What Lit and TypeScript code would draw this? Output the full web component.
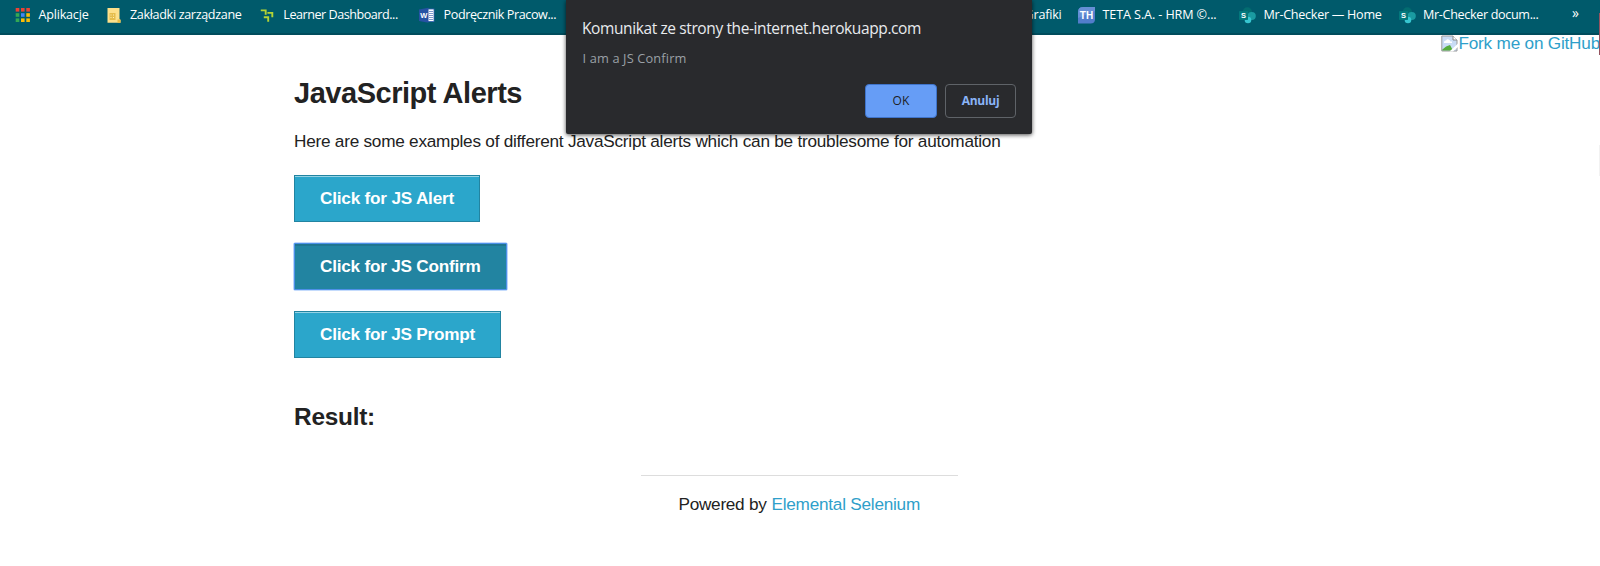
import { LitElement, html, css, svg, nothing } from "lit";
import { customElement, property, state } from "lit/decorators.js";
import { styleMap } from "lit/directives/style-map.js";

/** One line of text whose tracking is adjusted so that it spans a given width. */
@customElement("fit-text")
class FitText extends LitElement {
  static styles = css`
    :host { display: inline-block; white-space: nowrap; }
    .line { display: inline-block; white-space: pre; }
  `;
  @property() text = "";
  @property({ type: Number }) width = 0;
  @state() tracking = 0;
  firstUpdated() {
    const line = this.renderRoot.querySelector(".line") as HTMLElement;
    const natural = line.getBoundingClientRect().width;
    if (natural) this.tracking = (this.width - natural) / this.text.length;
  }
  render() {
    return html`<span class="line" style=${styleMap({ letterSpacing: `${this.tracking}px` })}>${this.text}</span>`;
  }
}

const appsColors = ["#ea4335", "#ea4335", "#ea4335", "#34a853", "#4285f4", "#fbbc05", "#34a853", "#fbbc05", "#fbbc05"];

const icons: Record<string, unknown> = {
  apps: svg`${appsColors.map((c, i) => svg`<rect x=${1.7 + (i % 3) * 5.3} y=${1 + Math.floor(i / 3) * 5.2} width="3.6" height="3.6" fill=${c} />`)}`,
  folder: svg`<path d="M2.5 1h12v11l1 1v2.8h-13z" fill="#fde08a"/><path d="M12.5 12.5h3v3.3h-3z" fill="#e9bd45"/><path d="M4.5 6h6v7h-6z" fill="#e5bd4c"/><path d="M5.5 7.5h1v1h-1zM8 7.5h1v1H8zM5.5 10h1v1h-1zM8 10h1v1H8z" fill="#fff0b5"/>`,
  learner: svg`<g fill="none" stroke="#b3d335" stroke-width="1.9"><path d="M1.8 3.4h4.9v4.4M8.4 5.9h4.9v4.4M4.8 10.2h4.4v4.6"/></g>`,
  word: svg`<rect x="8" y="2" width="7" height="12.5" fill="#fff" stroke="#3460b2" stroke-width=".8"/><path d="M10 4.5h4M10 6.5h4M10 8.5h4M10 10.5h4M10 12.5h4" stroke="#7190c8" stroke-width=".9"/><path d="M0 2.4 9.5.8v15L0 14z" fill="#2652a3"/><text x="4.7" y="11" text-anchor="middle" font-size="7.5" font-weight="700" font-family="Liberation Sans, sans-serif" fill="#fff">W</text>`,
  teta: svg`<path d="M5 0h12v12q0 4.5-4.5 4.5H0V5q0-5 5-5z" fill="#527dcb"/><path d="M5 0h12v4L0 11V5q0-5 5-5z" fill="#749bdc" opacity=".6"/><text x="8.5" y="12" text-anchor="middle" font-size="10" font-weight="700" font-family="Liberation Sans, sans-serif" fill="#fff">TH</text>`,
  share: svg`<circle cx="8.3" cy="5" r="4.7" fill="#036c70"/><circle cx="12.7" cy="9" r="4.1" fill="#1a9ba1"/><circle cx="9" cy="13" r="3.3" fill="#37c6d0"/><rect x="0" y="4" width="9" height="9" rx=".8" fill="#03787c"/><text x="4.5" y="11" text-anchor="middle" font-size="7.5" font-weight="700" font-family="Liberation Sans, sans-serif" fill="#fff">S</text>`,
};

interface Bookmark { icon: string; label: string; width: number; gap: number; after: number }

const leftMarks: Bookmark[] = [
  { icon: "apps", label: "Aplikacje", width: 50, gap: 7.5, after: 16.5 },
  { icon: "folder", label: "Zakładki zarządzane", width: 111.5, gap: 8, after: 17 },
  { icon: "learner", label: "Learner Dashboard...", width: 114.5, gap: 7.8, after: 21 },
  { icon: "word", label: "Podręcznik Pracow...", width: 112.5, gap: 7.8, after: 0 },
];
const rightMarks: Bookmark[] = [
  { icon: "", label: "Grafiki", width: 37, gap: 0, after: 16.5 },
  { icon: "teta", label: "TETA S.A. - HRM ©...", width: 114, gap: 7.5, after: 22.5 },
  { icon: "share", label: "Mr-Checker — Home", width: 118, gap: 7.5, after: 17 },
  { icon: "share", label: "Mr-Checker docum...", width: 115.5, gap: 7.5, after: 33.5 },
];

@customElement("app-root")
class AppRoot extends LitElement {
  static styles = css`
    :host { display: block; position: relative; width: 1600px; height: 566px; overflow: hidden; background: #fff; color: #222; font: 17.2px/24px "Liberation Sans", Arial, sans-serif; }
    * { box-sizing: border-box; }
    .bar { display: flex; justify-content: space-between; height: 35px; background: #005a6b; border-bottom: 2px solid #004c5c; color: #fff; font: 12.6px/29px "Open Sans", "Noto Sans", sans-serif; padding: 0 21px 0 14px; }
    .group { display: flex; align-items: flex-start; }
    .mark { display: flex; }
    .icon { width: 17px; height: 17px; margin-top: 7px; flex: none; }
    .more { font-size: 14px; line-height: 26px; }
    .fork { display: flex; justify-content: flex-end; height: 24px; margin-top: -4px; color: #2f9fca; line-height: 25px; }
    .broken { width: 17px; height: 17px; margin-top: 4px; flex: none; }
    .edge { position: absolute; right: 0; top: 13px; width: 1px; height: 42px; background: #94525f; }
    .edge-light { position: absolute; right: 0; top: 145px; width: 1px; height: 31px; background: #f2f2f2; }
    .content { padding-left: 294px; margin-top: 18px; display: flex; flex-direction: column; align-items: flex-start; }
    h1 { margin: 0; font-size: 29px; line-height: 40px; font-weight: 700; }
    p { margin: 16px 0 22px; line-height: 24px; }
    .buttons { display: flex; flex-direction: column; align-items: flex-start; gap: 21px; }
    .btn { display: block; height: 47px; margin: 0; padding: 0 25px; border: 1px solid #2284a1; border-radius: 0; background: #2ba6cb; color: #fff; font: 700 17.2px/45px "Liberation Sans", Arial, sans-serif; box-shadow: inset 0 1px 0 rgba(255,255,255,.5); }
    .btn.focused { background: #2284a1; border-color: #4d90e8; box-shadow: inset 0 2px 0 #1f7590, 0 0 0 .6px #8ab8fa; border-radius: 1px; }
    h2 { margin: 42px 0 0; font-size: 24.4px; line-height: 34px; font-weight: 700; }
    .footer { width: 317px; margin: 41px 0 0 641px; border-top: 1px solid #ddd; padding: 17px 0 0 37.5px; display: flex; line-height: 23px; }
    .link { color: #2f9fca; margin-left: 5px; }
    .dialog { position: absolute; left: 566px; top: 0; width: 466px; height: 134px; padding: 14px 16px 16px; background: #292a2d; border-radius: 0 0 2px 2px; box-shadow: 0 1px 4px rgba(0,0,0,.7); font-family: "Open Sans", "Noto Sans", sans-serif; display: flex; flex-direction: column; }
    .title { color: #e8eaed; font-size: 15.5px; line-height: 28px; }
    .message { color: #9aa0a6; font-size: 12.8px; line-height: 20px; margin-top: 6px; padding-left: .5px; }
    .actions { display: flex; justify-content: flex-end; gap: 8px; margin-top: 16px; }
    .act { display: flex; justify-content: center; width: 71px; height: 34px; margin: 0; padding: 0; border: 1px solid #5f6368; border-radius: 4px; background: transparent; color: #8ab4f8; font: 700 12px/32px "Open Sans", "Noto Sans", sans-serif; }
    .act.ok { width: 72px; background: #669df6; border-color: #3f74cb; color: #202124; font-weight: 500; }
  `;

  mark(b: Bookmark) {
    return html`<div class="mark" style=${styleMap({ columnGap: `${b.gap}px`, marginRight: `${b.after}px` })}>
      ${b.icon ? html`<svg class="icon" viewBox="0 0 17 17">${icons[b.icon]}</svg>` : nothing}
      <fit-text .text=${b.label} .width=${b.width}></fit-text>
    </div>`;
  }

  render() {
    return html`
      <div class="bar">
        <div class="group">${leftMarks.map((b) => this.mark(b))}</div>
        <div class="group">${rightMarks.map((b) => this.mark(b))}<span class="more">»</span></div>
      </div>
      <div class="fork">
        <svg class="broken" viewBox="0 0 17 17">
          <path d="M.8 1H12l4 4v11H.8z" fill="#c9dcf5" stroke="#9a9a9a"/>
          <path d="M3 8a2 2 0 0 1 2-2.5 2.3 2.3 0 0 1 4.3 1H11V8z" fill="#fff"/>
          <path d="M1.4 15.5v-1Q5 10.5 9 10l3 5.5z" fill="#56ad3c"/>
          <path d="M17 8.5 8.5 16.5h3.5L17 12z" fill="#fff"/>
          <path d="M12 1v4h4" fill="#fff" stroke="#8a8a8a"/>
        </svg>
        <fit-text .text=${"Fork me on GitHub"} .width=${141.5}></fit-text>
      </div>
      <div class="content">
        <h1><fit-text .text=${"JavaScript Alerts"} .width=${228}></fit-text></h1>
        <p><fit-text .text=${"Here are some examples of different JavaScript alerts which can be troublesome for automation"} .width=${706.5}></fit-text></p>
        <div class="buttons">
          <button class="btn"><fit-text .text=${"Click for JS Alert"} .width=${134}></fit-text></button>
          <button class="btn focused"><fit-text .text=${"Click for JS Confirm"} .width=${160.5}></fit-text></button>
          <button class="btn"><fit-text .text=${"Click for JS Prompt"} .width=${155}></fit-text></button>
        </div>
        <h2><fit-text .text=${"Result:"} .width=${81}></fit-text></h2>
      </div>
      <div class="footer">
        <fit-text .text=${"Powered by"} .width=${88}></fit-text>
        <fit-text class="link" .text=${"Elemental Selenium"} .width=${148.5}></fit-text>
      </div>
      <div class="edge"></div>
      <div class="edge-light"></div>
      <div class="dialog">
        <div class="title"><fit-text .text=${"Komunikat ze strony the-internet.herokuapp.com"} .width=${339}></fit-text></div>
        <div class="message"><fit-text .text=${"I am a JS Confirm"} .width=${104}></fit-text></div>
        <div class="actions">
          <button class="act ok"><fit-text .text=${"OK"} .width=${17}></fit-text></button>
          <button class="act"><fit-text .text=${"Anuluj"} .width=${37.5}></fit-text></button>
        </div>
      </div>
    `;
  }
}
